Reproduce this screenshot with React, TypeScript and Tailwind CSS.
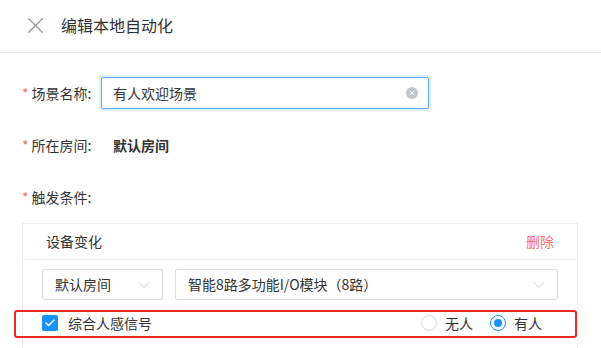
import { X, ChevronDown, Check } from 'lucide-react';

function Select({ value, className }: { value: string; className: string }) {
  return (
    <div
      className={`h-[31px] flex items-center justify-between pl-[12px] pr-[8px] border border-[#dcdfe6] rounded-[2px] bg-white text-[14px] text-[#333] ${className}`}
    >
      <span>{value}</span>
      <ChevronDown size={20} strokeWidth={1} className="text-[#c0c4cc]" />
    </div>
  );
}

function Radio({ label, checked }: { label: string; checked?: boolean }) {
  return (
    <label className="flex items-center gap-[8px]">
      <span
        className={`w-[16px] h-[16px] rounded-full border flex items-center justify-center bg-white ${
          checked ? 'border-[#1890ff]' : 'border-[#d9d9d9]'
        }`}
      >
        {checked && <span className="w-[8px] h-[8px] rounded-full bg-[#1890ff]" />}
      </span>
      <span>{label}</span>
    </label>
  );
}

export default function App() {
  return (
    <div
      className="w-[601px] h-[348px] bg-white overflow-hidden text-[14px] text-[#333]"
      style={{ fontFamily: '"Noto Sans CJK SC", "Noto Sans", sans-serif' }}
    >
      {/* header */}
      <div className="h-[53px] border-b border-[#e8e8e8] flex items-center pl-[22px] pb-[2px]">
        <X size={27} strokeWidth={1.1} className="text-[#999]" />
        <span className="ml-[12px] text-[16px] text-[#303133]">编辑本地自动化</span>
      </div>

      <div className="pt-[24px]">
        {/* scene name */}
        <div className="h-[32px] flex items-center pl-[22px]">
          <div className="w-[79px] flex items-center">
            <span className="text-[#f56c6c] mr-[3px]">*</span>
            <span>场景名称:</span>
          </div>
          <div className="w-[328px] h-[32px] border border-[#5cadff] rounded-[2px] shadow-[0_0_0_2px_rgba(45,140,240,0.15)] flex items-center justify-between pl-[11px] pr-[10px]">
            <span>有人欢迎场景</span>
            <span className="w-[12px] h-[12px] rounded-full bg-[#c0c4cc] flex items-center justify-center">
              <X size={8} strokeWidth={2.5} className="text-white" />
            </span>
          </div>
        </div>

        {/* room */}
        <div className="mt-[20px] h-[32px] flex items-center pl-[22px]">
          <div className="w-[91px] flex items-center">
            <span className="text-[#f56c6c] mr-[3px]">*</span>
            <span>所在房间:</span>
          </div>
          <span className="font-bold">默认房间</span>
        </div>

        {/* trigger */}
        <div className="mt-[20px] h-[32px] flex items-center pl-[22px]">
          <span className="text-[#f56c6c] mr-[3px]">*</span>
          <span>触发条件:</span>
        </div>

        {/* card */}
        <div className="mt-[10px] ml-[22px] w-[556px] h-[200px] border border-[#ebeef5]">
          <div className="h-[36px] border-b border-[#ebeef5] flex items-center justify-between pl-[23px] pr-[23px]">
            <span>设备变化</span>
            <span className="text-[#f56c6c]">删除</span>
          </div>
          <div className="px-[19px] pt-[9px]">
            <div className="flex gap-[12px]">
              <Select value="默认房间" className="w-[121px]" />
              <Select value="智能8路多功能I/O模块（8路）" className="flex-1" />
            </div>
            <div className="relative mt-[11px] h-[24px] flex items-center justify-between pr-[16px]">
              <div className="absolute -left-[28px] -right-[19px] -top-[1px] -bottom-[3px] border-2 border-[#ee2a24] rounded-[3px] pointer-events-none" />
              <label className="flex items-center gap-[10px]">
                <span className="w-[16px] h-[16px] rounded-[2px] bg-[#1890ff] flex items-center justify-center">
                  <Check size={12} strokeWidth={3} className="text-white" />
                </span>
                <span>综合人感信号</span>
              </label>
              <div className="flex items-center gap-[17px]">
                <Radio label="无人" />
                <Radio label="有人" checked />
              </div>
            </div>
          </div>
        </div>
      </div>
    </div>
  );
}
